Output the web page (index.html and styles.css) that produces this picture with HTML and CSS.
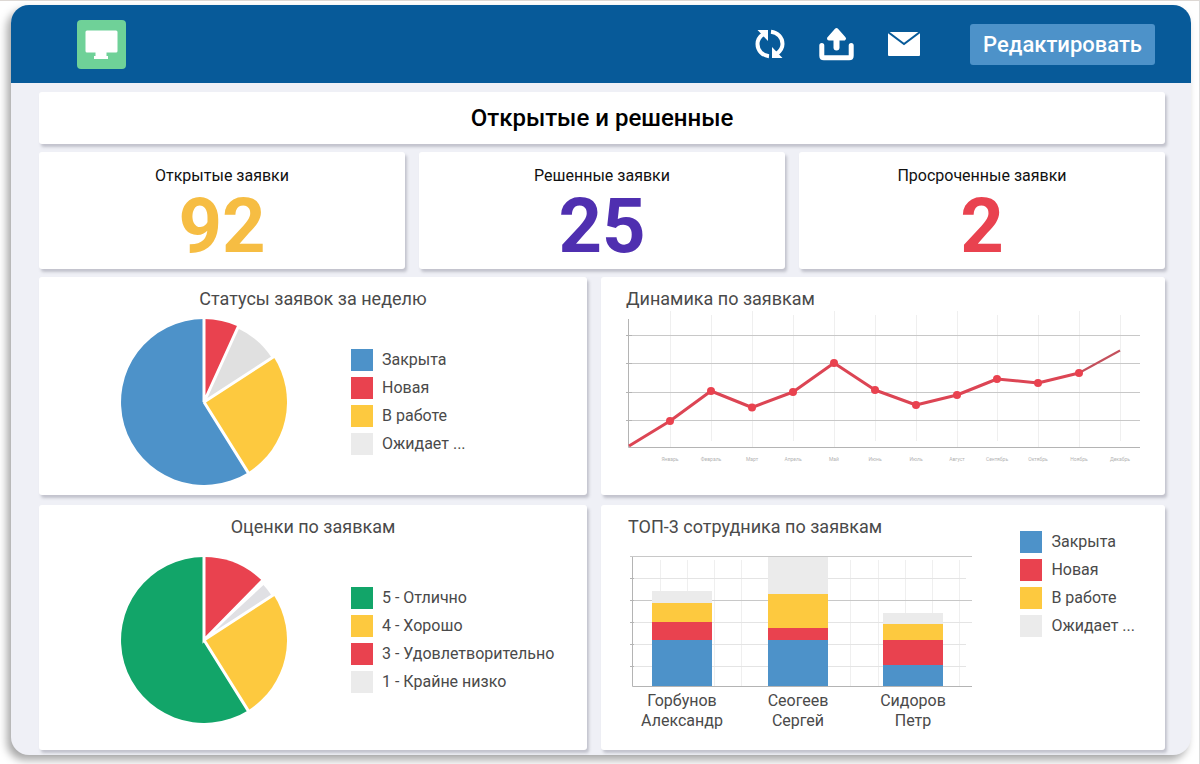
FILE: index.html
```html
<!DOCTYPE html>
<html lang="ru">
<head>
<meta charset="utf-8">
<title>Открытые и решенные</title>
<link rel="stylesheet" href="styles.css">
</head>
<body>
<div class="window">
  <header class="topbar">
    <div class="logo">
      <svg width="49" height="49" viewBox="0 0 49 49" aria-hidden="true"><path fill="#fff" d="M10 10.500h29a1.500 1.500 0 0 1 1.500 1.500v19a1.500 1.500 0 0 1-1.500 1.500h-9.500v3.500h1.500v3h-14v-3h1.500v-3.500H10A1.500 1.500 0 0 1 8.500 31V12A1.500 1.500 0 0 1 10 10.500z"/></svg>
    </div>
    <nav class="actions">
      <button class="icon-btn" type="button" aria-label="Обновить">
        <svg width="30" height="30" viewBox="0 0 30 30"><g fill="none" stroke="#fff" stroke-width="4"><path d="M14 27.200C7.500 26.500 2.500 21.500 2.500 15c0-4.200 2-7.200 6-10"/><path d="M16 2.800C22.500 3.500 27.500 8.500 27.500 15c0 4.200-2 7.200-6 10"/></g><path fill="#fff" d="M2.500 1H13v11zM27.500 29H17V18z"/></svg>
      </button>
      <button class="icon-btn" type="button" aria-label="Выгрузить">
        <svg width="35" height="34" viewBox="0 0 35 34"><g fill="none" stroke="#fff" stroke-linecap="round" stroke-linejoin="round"><path stroke-width="5" d="M2.800 18.500v10.200q0 2 2 2h25.400q2 0 2-2V18.500"/><path stroke-width="6" d="M17.500 20.500V8"/><path stroke-width="4" fill="#fff" d="M10 11.500l7.500-8.500 7.500 8.500z"/></g></svg>
      </button>
      <button class="icon-btn" type="button" aria-label="Почта">
        <svg width="32" height="24" viewBox="0 0 32 24"><rect width="32" height="24" rx="1" fill="#fff"/><path fill="none" stroke="#075a99" stroke-width="2" d="M0 0l16 12L32 0"/></svg>
      </button>
      <button class="edit-btn" type="button">Редактировать</button>
    </nav>
  </header>

  <main class="board">
    <h1 class="card board-title">Открытые и решенные</h1>

    <section class="row stats">
      <div class="card stat"><h2 class="stat-label">Открытые заявки</h2><p class="stat-value amber">92</p></div>
      <div class="card stat"><h2 class="stat-label">Решенные заявки</h2><p class="stat-value violet">25</p></div>
      <div class="card stat"><h2 class="stat-label">Просроченные заявки</h2><p class="stat-value red">2</p></div>
    </section>

    <section class="row charts">
      <div class="card">
        <h2 class="card-title centered">Статусы заявок за неделю</h2>
        <div class="pie-body">
          <svg class="pie" viewBox="0 0 166 166" role="img" aria-label="Статусы заявок">
            <path fill="#4d92c9" d="M83 83V0A83 83 0 1 0 127 153.400z"/>
            <path fill="#e9424f" d="M83 83V0A83 83 0 0 1 117.400 7.500z"/>
            <path fill="#e0e0e0" d="M83 83L116.600 9.300A81 81 0 0 1 150.900 38.900z"/>
            <path fill="#fdc93f" d="M83 83L152.600 37.800A83 83 0 0 1 127 153.400z"/>
            <path class="cut" d="M83 -2V83L118.200 5.700M83 83L154.200 36.700M83 83L128.100 155.100"/>
          </svg>
          <ul class="legend">
            <li><i class="swatch s-blue"></i>Закрыта</li>
            <li><i class="swatch s-red"></i>Новая</li>
            <li><i class="swatch s-yellow"></i>В работе</li>
            <li><i class="swatch s-grey"></i>Ожидает ...</li>
          </ul>
        </div>
      </div>

      <div class="card plot-card">
        <h2 class="card-title">Динамика по заявкам</h2>
        <svg class="line-plot" viewBox="0 0 524 158" role="img" aria-label="Динамика по заявкам">
          <path class="grid-v" d="M49.500 0V137M90.500 4V130M131.500 0V137M172.500 4V130M213.500 0V137M254.500 4V130M295.500 4V130M336.500 0V137M376.500 4V130M417.500 4V137M458.500 0V137M499.500 4V130"/>
          <path class="grid-h" d="M6 24.500H519M6 52.500H519M6 81.500H519M6 109.500H519"/>
          <path class="axis" d="M7.500 8V136.500H519M5 24.500H11M5 52.500H11M5 81.500H11M5 109.500H11"/>
          <path class="trend" d="M8 135L49 110 90 80 131 96.500 172 81 213 52 254 79 295 94 336 84 376 68 417 72 458 62"/>
          <path class="trend-tail" d="M458 62L499 39.500"/>
          <g fill="#e9424f"><circle cx="49" cy="110" r="4"/><circle cx="90" cy="80" r="4"/><circle cx="131" cy="96.500" r="4"/><circle cx="172" cy="81" r="4"/><circle cx="213" cy="52" r="4"/><circle cx="254" cy="79" r="4"/><circle cx="295" cy="94" r="4"/><circle cx="336" cy="84" r="4"/><circle cx="376" cy="68" r="4"/><circle cx="417" cy="72" r="4"/><circle cx="458" cy="62" r="4"/></g>
          <g class="months"><text x="49" y="150">Январь</text><text x="90" y="150">Февраль</text><text x="131" y="150">Март</text><text x="172" y="150">Апрель</text><text x="213" y="150">Май</text><text x="254" y="150">Июнь</text><text x="295" y="150">Июль</text><text x="336" y="150">Август</text><text x="376" y="150">Сентябрь</text><text x="417" y="150">Октябрь</text><text x="458" y="150">Ноябрь</text><text x="499" y="150">Декабрь</text></g>
        </svg>
      </div>
    </section>

    <section class="row charts tall">
      <div class="card">
        <h2 class="card-title centered">Оценки по заявкам</h2>
        <div class="pie-body">
          <svg class="pie" viewBox="0 0 166 166" role="img" aria-label="Оценки по заявкам">
            <path fill="#12a569" d="M83 83V0A83 83 0 1 0 127 153.400z"/>
            <path fill="#e9424f" d="M83 83V0A83 83 0 0 1 141.200 23.800z"/>
            <path fill="#e0e0e4" d="M83 83L142.500 28A81 81 0 0 1 150.900 38.900z"/>
            <path fill="#fdc93f" d="M83 83L152.600 37.800A83 83 0 0 1 127 153.400z"/>
            <path class="cut" d="M83 -2V83L143 22M83 83L154.200 36.700M83 83L128.100 155.100"/>
          </svg>
          <ul class="legend">
            <li><i class="swatch s-green"></i>5 - Отлично</li>
            <li><i class="swatch s-yellow"></i>4 - Хорошо</li>
            <li><i class="swatch s-red"></i>3 - Удовлетворительно</li>
            <li><i class="swatch s-grey"></i>1 - Крайне низко</li>
          </ul>
        </div>
      </div>

      <div class="card bar-card">
        <div class="bar-main">
          <h2 class="card-title">ТОП-3 сотрудника по заявкам</h2>
          <svg class="bar-plot" viewBox="0 0 352 182" role="img" aria-label="ТОП-3 сотрудника">
            <path class="grid-v" d="M36.500 8V134M63.500 8V134M90.500 8V134M117.500 8V134M145.500 8V134M172.500 8V134M199.500 8V134M226.500 8V134M254.500 8V134M281.500 8V134M308.500 8V134M335.500 8V134"/>
            <path class="grid-h faint" d="M8 26.500H342M8 70.500H348M8 92.500H342M8 114.500H342"/>
            <path class="grid-h" d="M6 4.500H348M8 48.500H348"/>
            <path class="axis" d="M8.500 5V134.500H348M6 26.500H10M6 48.500H10M6 70.500H10M6 92.500H10M6 114.500H10"/>
            <g fill="#ebebeb"><path d="M28 39h60v12H28zM144 5h60v38h-60zM259 61h60v11h-60z"/></g>
            <g fill="#fdc93f"><path d="M28 51h60v19H28zM144 42h60v34h-60zM259 72h60v17h-60z"/></g>
            <g fill="#e9424f"><path d="M28 70h60v18H28zM144 76h60v12h-60zM259 88h60v25h-60z"/></g>
            <g fill="#4d92c9"><path d="M28 88h60v46H28zM144 88h60v46h-60zM259 113h60v21h-60z"/></g>
            <g class="names"><text x="58" y="154">Горбунов</text><text x="58" y="174">Александр</text><text x="174" y="154">Сеогеев</text><text x="174" y="174">Сергей</text><text x="289" y="154">Сидоров</text><text x="289" y="174">Петр</text></g>
          </svg>
        </div>
        <ul class="legend">
          <li><i class="swatch s-blue"></i>Закрыта</li>
          <li><i class="swatch s-red"></i>Новая</li>
          <li><i class="swatch s-yellow"></i>В работе</li>
          <li><i class="swatch s-grey"></i>Ожидает ...</li>
        </ul>
      </div>
    </section>
  </main>
</div>
</body>
</html>
```

FILE: styles.css
```css
* { box-sizing: border-box; }

body {
  margin: 0;
  padding: 4px 8px 9px 11px;
  border-top: 1px solid #ddd8d4;
  border-right: 1px solid #dcdcdc;
  background: #fff;
  color: #4a4a4a;
  font-family: Roboto, "Liberation Sans", sans-serif;
}

h1, h2, p, ul { margin: 0; padding: 0; font-weight: 400; }

.window {
  border-radius: 18px;
  background: #eff0f6;
  box-shadow: -4px 5px 9px rgba(0, 0, 0, 0.35);
}

.topbar {
  display: flex;
  align-items: center;
  justify-content: space-between;
  height: 78px;
  padding: 0 36px 0 66px;
  border-radius: 18px 18px 0 0;
  background: #075a99;
}

.logo {
  width: 49px;
  height: 49px;
  border-radius: 4px;
  background: #6fd198;
}

.logo svg, .icon-btn svg { display: block; }

.actions { display: flex; align-items: center; gap: 34px; }

.icon-btn { padding: 0; border: 0; background: none; }

.edit-btn {
  height: 41px;
  margin-left: 16px;
  padding: 0 13px;
  border: 0;
  border-radius: 3px;
  background: #4d92c9;
  color: #fff;
  font: 500 22px/41px Roboto, "Liberation Sans", sans-serif;
}

.board {
  display: flex;
  flex-direction: column;
  padding: 9px 26px 5px 28px;
}

.card {
  border-radius: 3px;
  background: #fff;
  box-shadow: 2px 3px 3px rgba(60, 60, 80, 0.25);
}

.board-title {
  margin-bottom: 8px;
  color: #000;
  font-size: 24px;
  font-weight: 500;
  line-height: 52px;
  text-align: center;
}

.row { display: grid; }

.stats {
  grid-template-columns: repeat(3, 1fr);
  gap: 14px;
  margin-bottom: 8px;
}

.stat { padding: 12px 0 7px; text-align: center; }

.stat-label { color: #111; font-size: 16px; line-height: 24px; }

.stat-value { padding-top: 2px; font-size: 76px; font-weight: 700; line-height: 72px; }

.amber { color: #f6bd43; }
.violet { color: #4f2fb0; }
.red { color: #e9424f; }

.charts {
  grid-template-columns: 548fr 564fr;
  gap: 14px;
  margin-bottom: 10px;
}

.charts .card { padding-top: 10px; }

.card-title { font-size: 18px; line-height: 24px; }

.centered { text-align: center; }

.pie-body {
  display: flex;
  align-items: center;
  gap: 64px;
  padding: 8px 0 10px 82px;
}

.tall { margin-bottom: 0; }

.tall .pie-body { padding-top: 18px; padding-bottom: 27px; }

.pie { flex: none; width: 166px; height: 166px; }

.cut { fill: none; stroke: #fff; stroke-width: 3; }

.legend {
  display: grid;
  align-content: start;
  gap: 6px;
  list-style: none;
  font-size: 16px;
  line-height: 22px;
  white-space: nowrap;
}

.legend li { display: flex; gap: 9px; }

.swatch { width: 22px; height: 22px; }

.s-blue { background: #4d92c9; }
.s-red { background: #e9424f; }
.s-yellow { background: #fdc93f; }
.s-grey { background: #ebebeb; }
.s-green { background: #12a569; }

.plot-card { padding-left: 20px; padding-right: 20px; }

.plot-card .card-title { padding-left: 5px; }

.line-plot { display: block; width: 100%; }

.grid-v { fill: none; stroke: #efefef; }
.grid-h { fill: none; stroke: #c8c8c8; }
.grid-h.faint { stroke: #e4e4e4; }
.axis { fill: none; stroke: #b4b4b4; }

.trend { fill: none; stroke: #dc4554; stroke-width: 3; stroke-linejoin: round; }
.trend-tail { fill: none; stroke: #c4505c; stroke-width: 2; }

.months { fill: #b4b4b4; font-size: 5px; text-anchor: middle; }

.bar-card {
  display: flex;
  justify-content: space-between;
  padding-left: 23px;
  padding-right: 30px;
}

.bar-main { flex: 0 1 352px; }

.bar-main .card-title { padding-left: 4px; }

.bar-plot { display: block; width: 100%; margin-top: 13px; }

.names { fill: #4a4a4a; font-size: 16px; text-anchor: middle; }

.bar-card .legend { padding-top: 16px; }
```
